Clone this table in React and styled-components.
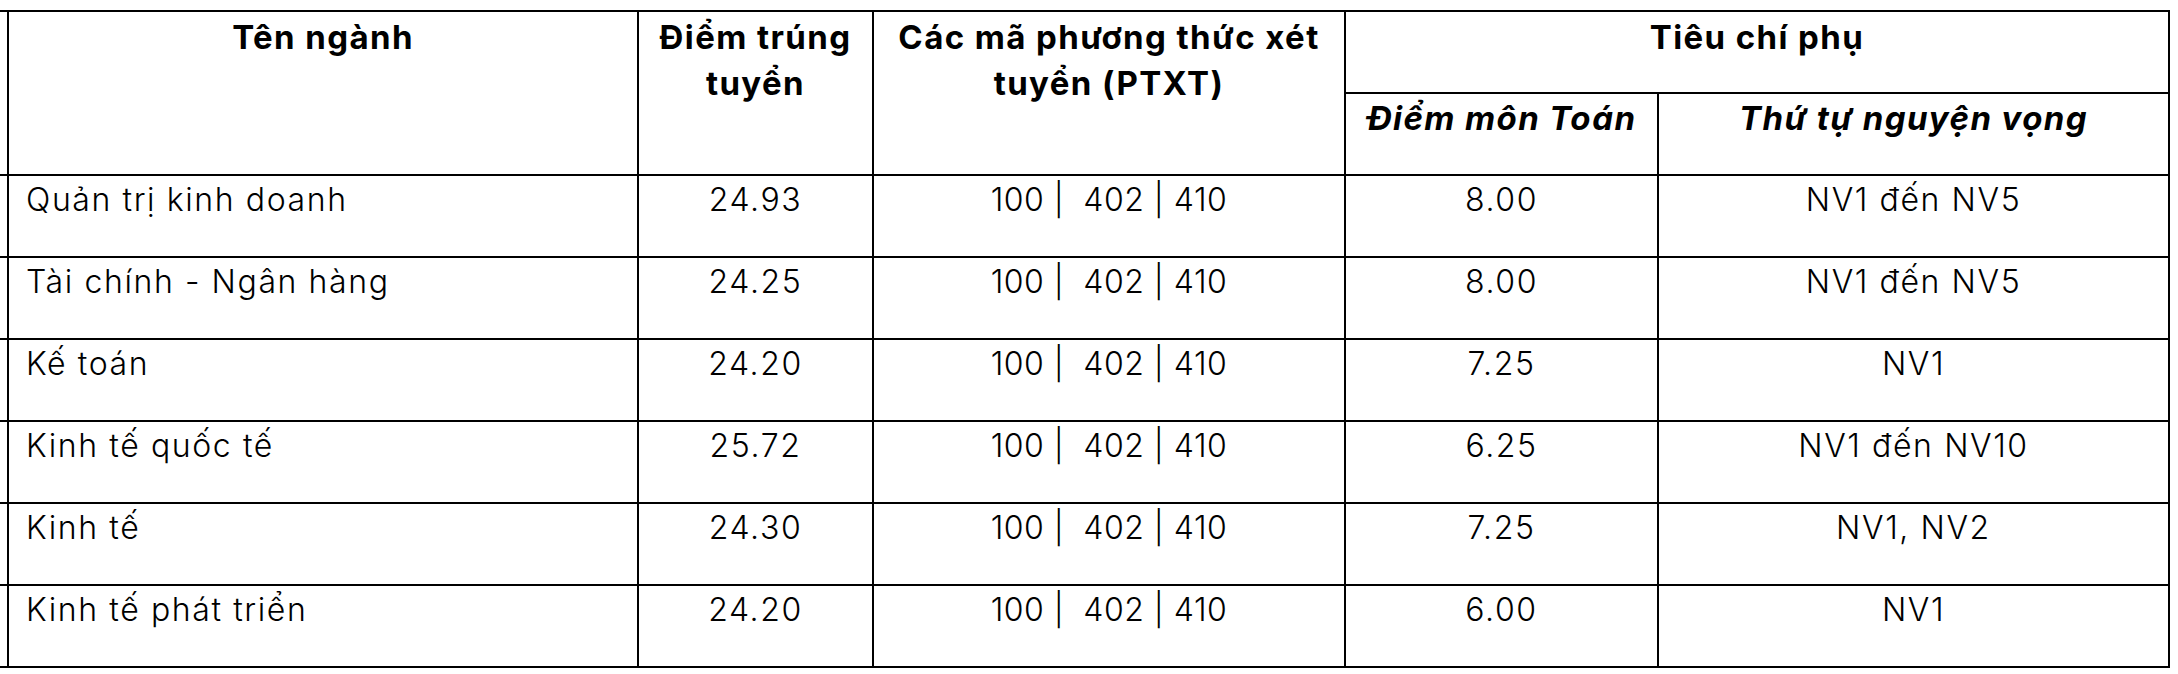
import React from "react";
import styled, { createGlobalStyle } from "styled-components";

const GlobalStyle = createGlobalStyle`
  html, body {
    margin: 0;
    padding: 0;
    background: #fff;
  }
  body {
    font-family: Inter, "Noto Sans", "Liberation Sans", sans-serif;
    color: #000;
  }
`;

const Page = styled.div`
  padding-top: 10px;
`;

const Table = styled.table`
  border-collapse: collapse;
  table-layout: fixed;
  width: 2170px;
`;

const Cell = styled.td`
  border: 2px solid #000;
  height: 82px;
  padding: 4px 14px 0 ${({ $align }) => ($align === "left" ? "17px" : "14px")};
  vertical-align: top;
  text-align: ${({ $align }) => $align || "center"};
  font-size: 32px;
  line-height: 40px;
  letter-spacing: ${({ $tight }) => ($tight ? "0.5px" : "1.6px")};
  font-weight: 300;
  box-sizing: border-box;
`;

const Stub = styled(Cell)`
  border-left: none;
  padding: 0;
`;

const HeadCell = styled(Cell).attrs({ as: "th" })`
  font-weight: 700;
  font-size: 33px;
  font-style: ${({ $italic }) => ($italic ? "italic" : "normal")};
  padding-top: ${({ $italic }) => ($italic ? "1px" : "2px")};
  line-height: 46px;
  letter-spacing: 1.4px;
`;

const rows = [
  ["Quản trị kinh doanh", "24.93", "8.00", "NV1 đến NV5"],
  ["Tài chính - Ngân hàng", "24.25", "8.00", "NV1 đến NV5"],
  ["Kế toán", "24.20", "7.25", "NV1"],
  ["Kinh tế quốc tế", "25.72", "6.25", "NV1 đến NV10"],
  ["Kinh tế", "24.30", "7.25", "NV1, NV2"],
  ["Kinh tế phát triển", "24.20", "6.00", "NV1"],
];

const widths = [8, 630, 235, 472, 313, 511];

export default function App() {
  return (
    <Page>
      <GlobalStyle />
      <Table>
        <colgroup>
          {widths.map((w, i) => (
            <col key={i} style={{ width: w }} />
          ))}
        </colgroup>
        <thead>
          <tr>
            <Stub as="th" rowSpan={2} />
            <HeadCell rowSpan={2}>Tên ngành</HeadCell>
            <HeadCell rowSpan={2}>
              Điểm trúng
              <br />
              tuyển
            </HeadCell>
            <HeadCell rowSpan={2}>
              Các mã phương thức xét
              <br />
              tuyển (PTXT)
            </HeadCell>
            <HeadCell colSpan={2}>Tiêu chí phụ</HeadCell>
          </tr>
          <tr>
            <HeadCell $italic>Điểm môn Toán</HeadCell>
            <HeadCell $italic>Thứ tự nguyện vọng</HeadCell>
          </tr>
        </thead>
        <tbody>
          {rows.map(([name, score, math, order]) => (
            <tr key={name}>
              <Stub />
              <Cell $align="left">{name}</Cell>
              <Cell>{score}</Cell>
              <Cell $tight>100 |&nbsp; 402 | 410</Cell>
              <Cell>{math}</Cell>
              <Cell>{order}</Cell>
            </tr>
          ))}
        </tbody>
      </Table>
    </Page>
  );
}
